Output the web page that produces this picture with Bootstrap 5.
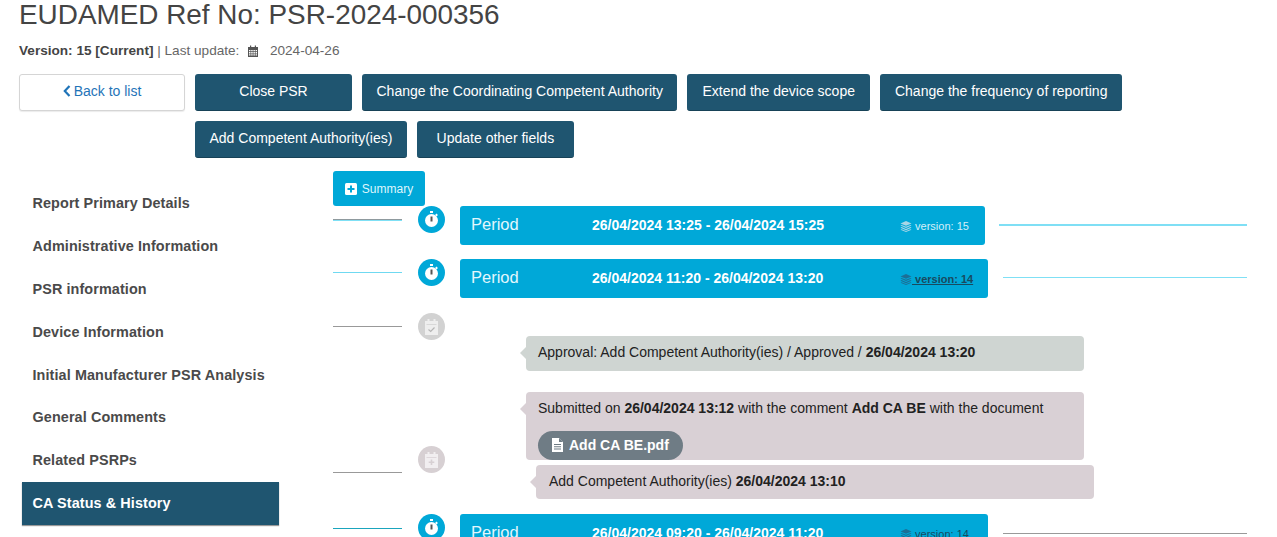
<!DOCTYPE html>
<html lang="en">
<head>
<meta charset="utf-8">
<title>EUDAMED PSR</title>
<link href="https://cdn.jsdelivr.net/npm/bootstrap@5.3.0/dist/css/bootstrap.min.css" rel="stylesheet">
<style>
html,body{height:537px;overflow:hidden}
body{font-family:"Liberation Sans",Arial,sans-serif;font-size:14px;color:#333;background:#fff}
.page-wrap{padding:0 0 0 19px}
.ref-title{font-size:27.9px;line-height:29px;font-weight:400;color:#444;margin:0}
.meta-line{font-size:13.6px;line-height:16px;color:#666;margin:14px 0 0;height:16px}
.meta-line b{color:#444}
.meta-line svg{margin:0 7px 0 4px;vertical-align:-2px}
.action-area{margin-top:15px;gap:10px}
.back-btn{width:166px;height:36.5px;flex:none;background:#fff;border:1px solid #d5d5d5;border-radius:3px;color:#1f74b8;font-size:14px;padding:0;line-height:33px;box-shadow:0 1px 1px rgba(0,0,0,.08)}
.back-btn svg{vertical-align:-1px;margin-right:3px}
.btn-stack{gap:10.500px 10px;width:960px}
.act-btn{height:36.500px;padding:0 15px;background:#1f5570;border:0;border-bottom:1px solid #174257;border-radius:3px;color:#fff;font-size:14px;line-height:35px;white-space:nowrap}
.act-btn:hover{background:#1f5570;color:#fff}
.w-close{width:157px}
.w-other{width:157px}
.w-add{padding:0 14.500px}
.w-coord{padding:0 14.500px}
.body-area{margin-top:13.500px}
.side-col{width:257px;flex:none;margin:11px 54px 0 22px}
.side-link{display:block;height:42.900px;line-height:42px;padding:0 10.500px;font-weight:700;font-size:14.4px;color:#4a4a4a;text-decoration:none;letter-spacing:.1px;white-space:nowrap}
.side-link.active-item{background:#1f5570;color:#fff;box-shadow:0 1px 1px rgba(0,0,0,.4)}
.tl-col{flex:1 1 auto;min-width:0}
.sum-btn{width:92px;height:35px;padding:0;background:#00a8d8;border:0;border-radius:3px;color:#dff6fd;font-size:12px;line-height:34px}
.sum-btn:hover{background:#00a8d8;color:#dff6fd}
.sum-btn svg{vertical-align:-2px;margin-right:5px}
.tl-row{display:flex;align-items:flex-start}
.rail{width:127px;flex:none;display:flex;align-items:flex-start}
.rule{height:1px;background:#999;width:69px;flex:none}
.rule-cyan{background:#6fd9f1}
.rule-mix{height:2px;background:linear-gradient(#8f9a9e 50%,#7fe0f5 50%)}
.rule-teal{background:#1aa5bd}
.dot{width:27px;height:27px;border-radius:50%;display:flex;align-items:center;justify-content:center;flex:none;margin-left:15.500px;background:#00a8d8}
.dot-gray{background:#d2d2d2}
.dot-mauve{background:#d7d0d3}
.period-card{height:39px;background:#00a8d8;border-radius:3px;color:#fff;display:flex;align-items:center;flex:none;position:relative}
.p-label{font-size:16.500px;color:#e2f7fd;margin:-2px 0 0 11px;width:121px;flex:none}
.p-date{font-weight:700;font-size:14px;flex:none;width:308px;white-space:nowrap;margin-top:-1px}
.p-ver{font-size:11px;color:#d4eff8;white-space:nowrap;margin-top:1px}
.p-ver svg{vertical-align:-2px;margin-right:0}
.p-ver-link{color:#184a5f;font-weight:700;text-decoration:underline}
.p-ver-link:hover{color:#184a5f}
.p-ver-plain{color:#184a5f}
.rule-right{flex:none;height:1px}
.bubble{width:558px;border-radius:4px;padding:7px 12px;position:relative;color:#222;font-size:14px;line-height:18px}
.bubble::before{content:"";position:absolute;left:-6px;top:11px;border-style:solid;border-width:6px 6px 6px 0;border-color:transparent}
.bub-green{background:#cfd5d2}
.bub-green::before{border-right-color:#cfd5d2}
.bub-mauve{background:#d9d0d5}
.bub-mauve::before{border-right-color:#d9d0d5}
.doc-pill{display:inline-flex;align-items:center;height:29px;padding:0 14px 2px 14px;margin-top:14px;border-radius:15px;background:#6f7c85;color:#fff;font-weight:700;font-size:14px;text-decoration:none;vertical-align:top}
.doc-pill:hover{color:#fff}
.doc-pill svg{margin-right:6px}
.tl-m1,.tl-m2,.tl-m3{margin-top:13px}
.tl-m4{margin-top:80px}
.tl-m5{margin-top:14px}
.card-a{width:525px}
.card-b{width:528px}
.rr-a{width:248px;height:2px;margin:18px 0 0 14px;background:#7fdff5}
.rr-b{width:244px;margin:18px 0 0 15px}
.rr-c{width:244px;margin:19px 0 0 15px;background:#999}
.mt-row2{margin-top:14px}
.mt-row3{margin-top:15px}
.bub-a{margin:23px 0 0 66px;height:35px}
.mt-row4{margin-top:21px}
.bub-col{display:flex;flex-direction:column}
.bub-b{margin-left:66px;height:68px}
.bub-c{margin:5px 0 0 76px;height:34px;padding-left:13px}
.tl-d4{margin-top:54px}
.mt-row5{margin-top:15px}
</style>
</head>
<body>
<div class="page-wrap">
  <h1 class="ref-title">EUDAMED Ref No: PSR-2024-000356</h1>
  <p class="meta-line"><b>Version: 15 [Current]</b> | Last update: <svg width="12" height="12" viewBox="0 0 12 12"><path fill="#555" d="M1 2h10v10H1z"/><path fill="#fff" d="M2 5h1.500v1.300H2zM4.200 5h1.500v1.300H4.200zM6.400 5h1.500v1.300H6.400zM8.600 5H10v1.300H8.600zM2 7.100h1.500v1.300H2zM4.200 7.100h1.500v1.300H4.200zM6.400 7.100h1.500v1.300H6.400zM8.600 7.100H10v1.300H8.600zM2 9.200h1.500v1.300H2zM4.200 9.200h1.500v1.300H4.200zM6.400 9.200h1.500v1.300H6.400zM8.600 9.200H10v1.300H8.600z"/><path fill="#555" d="M3 .5h1.200v2H3zM7.800.5H9v2H7.800z"/></svg> 2024-04-26</p>
  <div class="action-area d-flex align-items-start">
    <a class="btn back-btn" href="#"><svg width="8" height="12" viewBox="0 0 8 12"><path d="M6.500 1 1.800 6l4.700 5" fill="none" stroke="#1f74b8" stroke-width="2.200"/></svg>Back to list</a>
    <div class="btn-stack d-flex flex-wrap">
      <button class="btn act-btn w-close" type="button">Close PSR</button>
      <button class="btn act-btn w-coord" type="button">Change the Coordinating Competent Authority</button>
      <button class="btn act-btn" type="button">Extend the device scope</button>
      <button class="btn act-btn" type="button">Change the frequency of reporting</button>
      <button class="btn act-btn w-add" type="button">Add Competent Authority(ies)</button>
      <button class="btn act-btn w-other" type="button">Update other fields</button>
    </div>
  </div>
</div>
<div class="body-area d-flex">
  <nav class="side-col">
    <a class="side-link" href="#">Report Primary Details</a>
    <a class="side-link" href="#">Administrative Information</a>
    <a class="side-link" href="#">PSR information</a>
    <a class="side-link" href="#">Device Information</a>
    <a class="side-link" href="#">Initial Manufacturer PSR Analysis</a>
    <a class="side-link" href="#">General Comments</a>
    <a class="side-link" href="#">Related PSRPs</a>
    <a class="side-link active-item" href="#">CA Status &amp; History</a>
  </nav>
  <div class="tl-col">
    <button class="btn sum-btn d-block" type="button"><svg width="12" height="12" viewBox="0 0 12 12"><rect width="12" height="12" rx="1.500" fill="#fff"/><path d="M5 2.500h2V5h2.500v2H7v2.500H5V7H2.500V5H5z" fill="#00a8d8"/></svg>Summary</button>

    <div class="tl-row">
      <div class="rail">
        <span class="rule rule-mix tl-m1"></span>
        <span class="dot"><svg width="15" height="17" viewBox="0 0 15 17"><rect x="6" y="0" width="3" height="2" fill="#fff"/><rect x="11.500" y="3" width="2" height="2" fill="#fff" transform="rotate(45 12.500 4)"/><circle cx="7.500" cy="9.500" r="6.500" fill="#fff"/><rect x="6.500" y="5.500" width="2" height="5" fill="#555"/></svg></span>
      </div>
      <div class="period-card card-a">
        <span class="p-label">Period</span>
        <span class="p-date">26/04/2024 13:25 - 26/04/2024 15:25</span>
        <span class="p-ver"><svg width="12" height="11" viewBox="0 0 12 11"><path fill="#a9d6e6" d="M6 0l5.500 2.400L6 4.800.5 2.400zM1.600 3.900 6 5.800l4.400-1.900 1.100.7L6 7.100.5 4.600zM1.600 6.100 6 8l4.400-1.900 1.100.7L6 9.300.5 6.800zM1.600 8.200 6 10l4.400-1.800 1.100.6L6 11 .5 8.800z"/></svg> version: 15</span>
      </div>
      <span class="rule-right rr-a"></span>
    </div>

    <div class="tl-row mt-row2">
      <div class="rail">
        <span class="rule rule-cyan tl-m2"></span>
        <span class="dot"><svg width="15" height="17" viewBox="0 0 15 17"><rect x="6" y="0" width="3" height="2" fill="#fff"/><rect x="11.500" y="3" width="2" height="2" fill="#fff" transform="rotate(45 12.500 4)"/><circle cx="7.500" cy="9.500" r="6.500" fill="#fff"/><rect x="6.500" y="5.500" width="2" height="5" fill="#555"/></svg></span>
      </div>
      <div class="period-card card-b">
        <span class="p-label">Period</span>
        <span class="p-date">26/04/2024 11:20 - 26/04/2024 13:20</span>
        <a class="p-ver p-ver-link" href="#"><svg width="12" height="11" viewBox="0 0 12 11"><path fill="#1c6f96" d="M6 0l5.500 2.400L6 4.800.5 2.400zM1.600 3.900 6 5.800l4.400-1.900 1.100.7L6 7.100.5 4.600zM1.600 6.100 6 8l4.400-1.900 1.100.7L6 9.300.5 6.800zM1.600 8.200 6 10l4.400-1.800 1.100.6L6 11 .5 8.800z"/></svg> version: 14</a>
      </div>
      <span class="rule-right rule-mix rr-b"></span>
    </div>

    <div class="tl-row mt-row3">
      <div class="rail">
        <span class="rule tl-m3"></span>
        <span class="dot dot-gray"><svg width="15" height="16" viewBox="0 0 15 16"><path fill="#eee" d="M1 2h13v14H1z"/><path fill="#eee" d="M3.500 0h2v3h-2zM9.500 0h2v3h-2z"/><path fill="#d2d2d2" d="M2.500 5h10v.8h-10z"/><path d="M4.500 10.500 6.700 12.500 10.500 8.500" fill="none" stroke="#b5b5b5" stroke-width="1.200"/></svg></span>
      </div>
      <div class="bubble bub-green bub-a">Approval: Add Competent Authority(ies) / Approved / <b>26/04/2024 13:20</b></div>
    </div>

    <div class="tl-row mt-row4">
      <div class="rail">
        <span class="rule tl-m4"></span>
        <span class="dot dot-mauve tl-d4"><svg width="15" height="16" viewBox="0 0 15 16"><path fill="#f1eef0" d="M1 2h13v14H1z"/><path fill="#f1eef0" d="M3.500 0h2v3h-2zM9.500 0h2v3h-2z"/><path fill="#d7d0d3" d="M2.500 5h10v.8h-10zM6.700 7.500h1.600v2h2V11h-2v2H6.700v-2h-2V9.500h2z"/></svg></span>
      </div>
      <div class="bub-col">
        <div class="bubble bub-mauve bub-b">Submitted on <b>26/04/2024 13:12</b> with the comment <b>Add CA BE</b> with the document<br><a class="doc-pill" href="#"><svg width="11" height="14" viewBox="0 0 11 14"><path fill="#fff" d="M0 0h7l4 4v10H0z"/><path fill="#6f7c85" d="M7 0v4h4zM2 6h7v1H2zM2 8.200h7v1H2zM2 10.400h7v1H2z"/></svg>Add CA BE.pdf</a></div>
        <div class="bubble bub-mauve bub-c">Add Competent Authority(ies) <b>26/04/2024 13:10</b></div>
      </div>
    </div>

    <div class="tl-row mt-row5">
      <div class="rail">
        <span class="rule rule-teal tl-m5"></span>
        <span class="dot"><svg width="15" height="17" viewBox="0 0 15 17"><rect x="6" y="0" width="3" height="2" fill="#fff"/><rect x="11.500" y="3" width="2" height="2" fill="#fff" transform="rotate(45 12.500 4)"/><circle cx="7.500" cy="9.500" r="6.500" fill="#fff"/><rect x="6.500" y="5.500" width="2" height="5" fill="#555"/></svg></span>
      </div>
      <div class="period-card card-b">
        <span class="p-label">Period</span>
        <span class="p-date">26/04/2024 09:20 - 26/04/2024 11:20</span>
        <span class="p-ver p-ver-plain"><svg width="12" height="11" viewBox="0 0 12 11"><path fill="#1c6f96" d="M6 0l5.500 2.400L6 4.800.5 2.400zM1.600 3.900 6 5.800l4.400-1.900 1.100.7L6 7.100.5 4.600zM1.600 6.100 6 8l4.400-1.900 1.100.7L6 9.300.5 6.800zM1.600 8.200 6 10l4.400-1.800 1.100.6L6 11 .5 8.800z"/></svg> version: 14</span>
      </div>
      <span class="rule-right rr-c"></span>
    </div>
  </div>
</div>
</body>
</html>
